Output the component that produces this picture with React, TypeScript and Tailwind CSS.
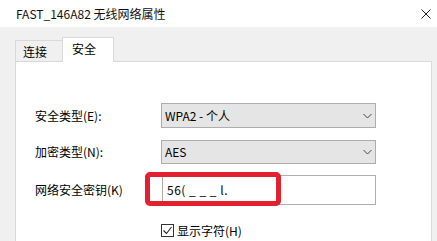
import React from "react";

const font = { fontFamily: '"Noto Sans CJK SC", "Noto Sans", sans-serif' };

function Chevron() {
  return (
    <svg width="9" height="6" viewBox="0 0 9 6" className="mr-[3px]">
      <polyline points="0.5,1 4.5,5 8.5,1" fill="none" stroke="#444" strokeWidth="1" />
    </svg>
  );
}

export default function App() {
  return (
    <div
      className="w-[437px] h-[241px] overflow-hidden bg-[#f0f0f0] text-[12px] text-black leading-none"
      style={font}
    >
      <div className="h-[27px] bg-white flex items-center justify-between pl-[16px] pr-[6px]">
        <span className="text-[12px] text-[#111]">FAST_146A82 无线网络属性</span>
        <svg width="10" height="10" viewBox="0 0 10 10" className="mr-[0px]">
          <path d="M0.5 0.5 L9.5 9.5 M9.5 0.5 L0.5 9.5" stroke="#222" strokeWidth="1" />
        </svg>
      </div>
      <div className="pl-[15px] pt-[10px] pr-[5px]">
        <div className="flex items-end h-[24px]">
          <div className="h-[21px] w-[48px] border-l border-t border-[#d9d9d9] bg-[#f0f0f0] flex items-center pl-[7px] pt-[2px]">
            连接
          </div>
          <div className="relative z-10 -mb-[1px] h-[25px] w-[52px] border-l border-t border-r border-[#d9d9d9] bg-white flex items-center pl-[9px] -ml-[1px] pb-[2px]">
            安全
          </div>
        </div>
        <div className="h-[200px] w-[417px] border border-[#d9d9d9] bg-white pl-[19px] pt-[41px]">
          <div className="flex items-center h-[25px]">
            <div className="w-[126px]">安全类型(E):</div>
            <div className="w-[215px] h-[25px] border border-[#adadad] bg-[#e5e5e5] flex items-center justify-between pl-[3px]">
              <span>WPA2 - 个人</span>
              <Chevron />
            </div>
          </div>
          <div className="flex items-center h-[24px] mt-[12px]">
            <div className="w-[126px]">加密类型(N):</div>
            <div className="w-[215px] h-[24px] border border-[#adadad] bg-[#e5e5e5] flex items-center justify-between pl-[3px]">
              <span>AES</span>
              <Chevron />
            </div>
          </div>
          <div className="flex items-center h-[30px] mt-[11px]">
            <div className="w-[127px]">网络安全密钥(K)</div>
            <div className="relative w-[214px] h-[30px] border border-[#adadad] bg-white flex items-center pl-[4px]">
              <span className="tracking-[0.5px]">56( _ _ _ l.</span>
              <div className="absolute left-[-18px] top-[-4px] w-[136px] h-[34px] border-[5px] border-[#e3202e] rounded-[5px]" />
            </div>
          </div>
          <div className="flex items-center mt-[19px] pl-[126px]">
            <div className="w-[13px] h-[13px] border border-[#333] bg-white flex items-center justify-center">
              <svg width="11" height="11" viewBox="0 0 11 11">
                <polyline points="1.5,5.5 4.5,8.5 9.5,2" fill="none" stroke="#222" strokeWidth="1.1" />
              </svg>
            </div>
            <span className="ml-[3px]">显示字符(H)</span>
          </div>
        </div>
      </div>
    </div>
  );
}
